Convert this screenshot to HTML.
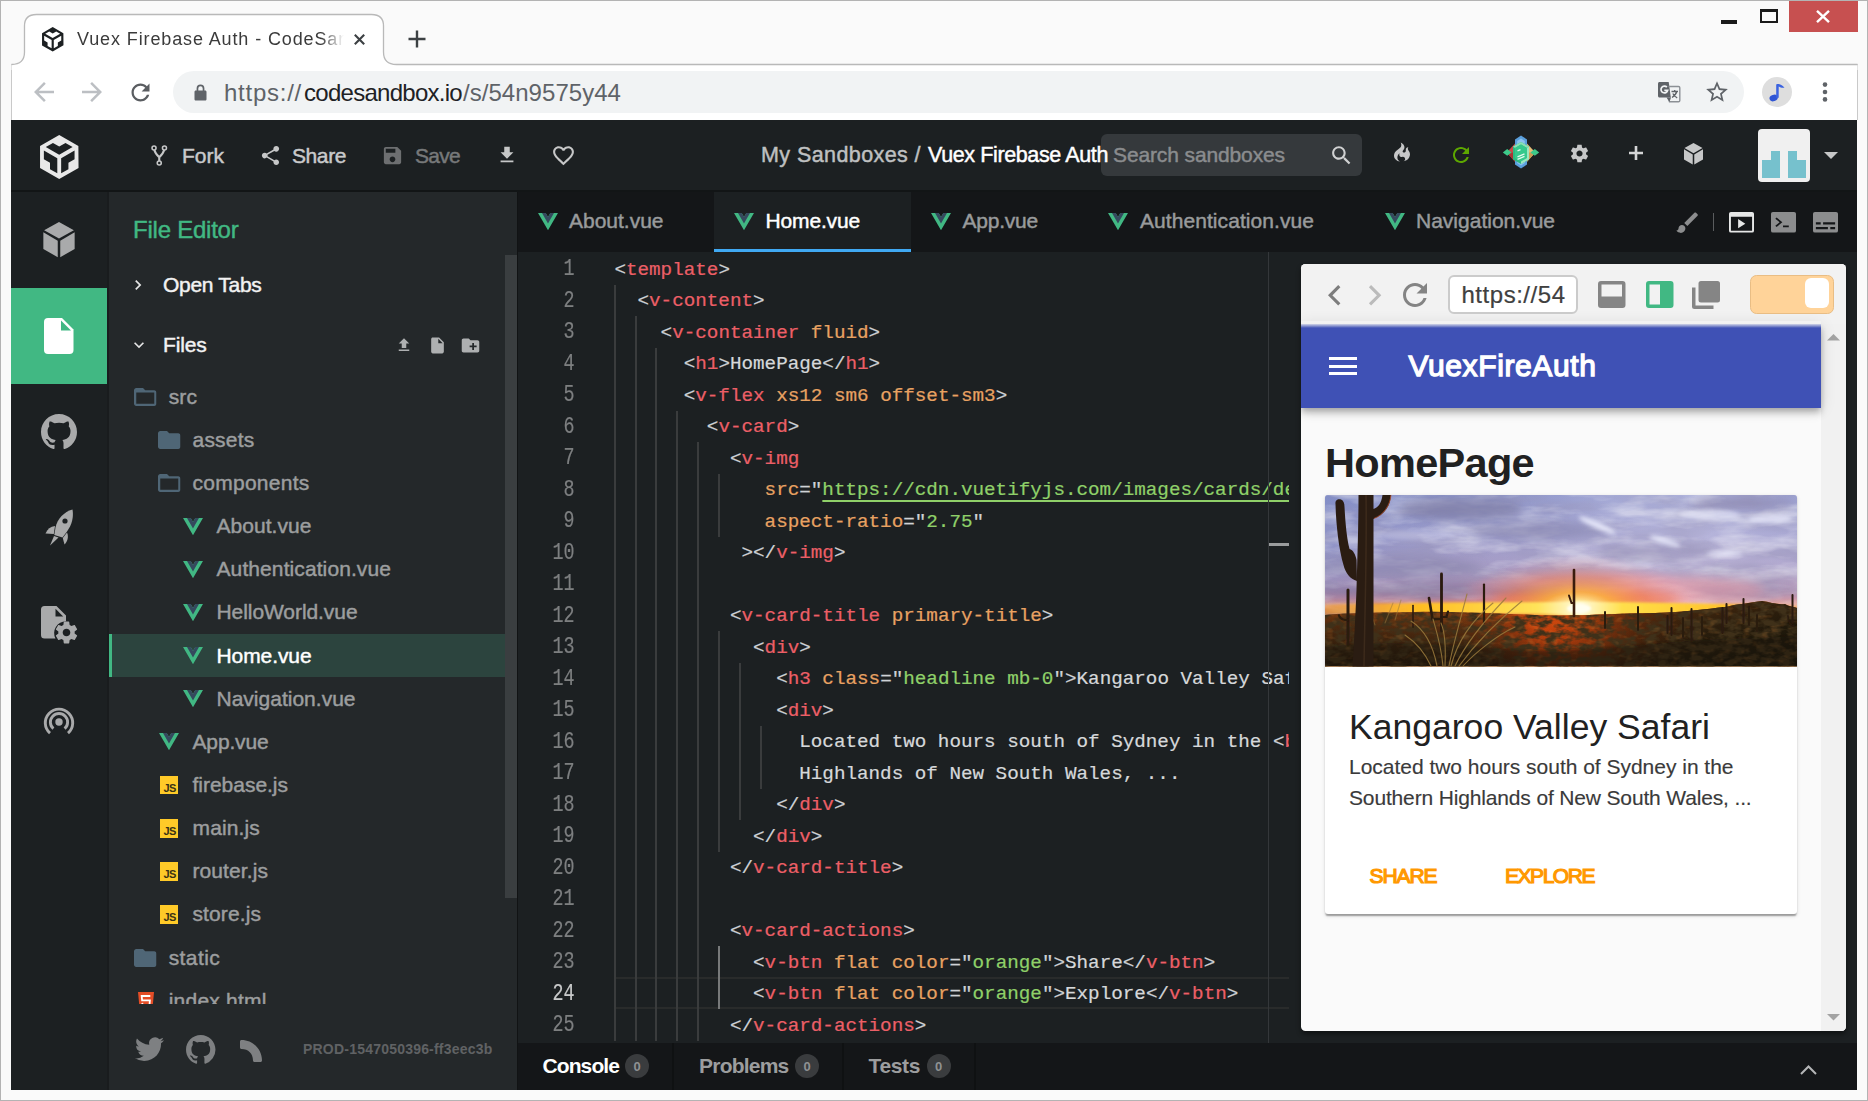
<!DOCTYPE html>
<html lang="en"><head><meta charset="utf-8"><title>Vuex Firebase Auth - CodeSandbox</title>
<style>
*{box-sizing:border-box;margin:0;padding:0}
html,body{width:1868px;height:1101px;overflow:hidden}
body{position:relative;background:#fafafa;font-family:"Liberation Sans",sans-serif;color:#222}
.a{position:absolute}
.x{position:absolute;white-space:nowrap;line-height:1;display:block}
svg{position:absolute;overflow:visible}
.b{font-weight:bold}
.w{-webkit-text-stroke:.45px currentColor}
.m{-webkit-text-stroke:.9px currentColor}
.mono{font-family:"Liberation Mono",monospace}
/* code colours */
.p{color:#cfd2d6}.tg{color:#ec5f67}.at{color:#e8a262}.st{color:#8fd069}.tx{color:#d6d8da}
.ln{-webkit-text-stroke:.3px currentColor;position:absolute;left:517px;width:57.5px;text-align:right;color:#7d7f80;font-family:"Liberation Mono",monospace;font-size:19.25px;line-height:1;white-space:nowrap}
.ln2{width:57.5px;text-align:right;font-family:"Liberation Mono",monospace;font-size:23px;transform:scaleX(.8);transform-origin:100% 50%;-webkit-text-stroke:.2px currentColor}
.cl{position:absolute;left:614.4px;-webkit-text-stroke:.22px currentColor;font-family:"Liberation Mono",monospace;font-size:19.25px;line-height:1;white-space:pre}
.g{position:absolute;width:2px;background:#353738}
.fn{color:#a9abac;font-size:21px}
</style></head>
<body>
<!-- ===== window frame ===== -->
<div class="a" style="left:0;top:0;width:1868px;height:1101px;border:1px solid #b3b3b3"></div>
<!-- toolbar white -->
<div class="a" style="left:11px;top:64px;width:1847px;height:56px;background:#fff;border-left:1px solid #c9c9c9;border-right:1px solid #c9c9c9"></div>
<!-- tab shape -->
<svg style="left:0;top:0" width="1868" height="70" viewBox="0 0 1868 70">
 <path d="M11.5 64.5 Q24.5 64.5 24.5 52 L24.5 26 Q24.5 14.5 36.5 14.5 L371.5 14.5 Q383.5 14.5 383.5 26 L383.5 52 Q383.5 64.5 396.5 64.5 L1857.5 64.5 L1857.5 70 L11.5 70 Z" fill="#fff"/>
 <path d="M11.5 64.5 Q24.5 64.5 24.5 52 L24.5 26 Q24.5 14.5 36.5 14.5 L371.5 14.5 Q383.5 14.5 383.5 26 L383.5 52 Q383.5 64.5 396.5 64.5 L1857.5 64.5" fill="none" stroke="#b9b9b9" stroke-width="1.3"/>
</svg>
<!-- ===== chrome tab strip ===== -->
<svg style="left:41.5px;top:27px" width="21.5" height="24.5" viewBox="2 0 21 24"><path fill="#1c2022" fill-rule="evenodd" d="M2 6l10.455-6L22.91 6 23 17.95 12.455 24 2 18V6zm2.088 2.481v4.757l3.345 1.86v3.516l3.972 2.296v-8.272L4.088 8.481zm16.739 0l-7.317 4.157v8.272l3.972-2.296V15.1l3.345-1.861V8.48zM5.134 6.601l7.303 4.144 7.32-4.18-3.871-2.197-3.41 1.945-3.43-1.968L5.133 6.6z"/></svg>
<span class="x" style="left:77.00px;top:30.00px;letter-spacing:0.879px;font-size:18px;color:#3b3b3b;-webkit-mask-image:linear-gradient(90deg,#000 0,#000 244px,transparent 267px);mask-image:linear-gradient(90deg,#000 0,#000 244px,transparent 267px)">Vuex Firebase Auth - CodeSand</span>
<svg style="left:354px;top:33.5px" width="11" height="11" viewBox="0 0 11 11"><path d="M0.8 0.8L10.2 10.2M10.2 0.8L0.8 10.2" stroke="#3c4043" stroke-width="2.1" fill="none"/></svg>
<svg style="left:407.5px;top:30px" width="18" height="18" viewBox="0 0 18 18"><path d="M9 0.5V17.5M0.5 9H17.5" stroke="#3c4043" stroke-width="2.4" fill="none"/></svg>
<!-- window controls -->
<div class="a" style="left:1721px;top:20px;width:16px;height:3.5px;background:#1a1a1a"></div>
<div class="a" style="left:1760px;top:9px;width:18px;height:14px;border:2.5px solid #1a1a1a;border-top-width:3px"></div>
<div class="a" style="left:1789px;top:1px;width:69px;height:31px;background:#c75050"></div>
<svg style="left:1816px;top:9.5px" width="14" height="13" viewBox="0 0 14 13"><path d="M1 0.8L13 12.2M13 0.8L1 12.2" stroke="#fff" stroke-width="2.4" fill="none"/></svg>
<!-- ===== chrome toolbar ===== -->
<svg style="left:29px;top:77px" width="30" height="30" viewBox="0 0 24 24"><path fill="#bcbfc3" d="M20 11H7.83l5.59-5.59L12 4l-8 8 8 8 1.41-1.41L7.83 13H20v-2z"/></svg>
<svg style="left:77px;top:77px" width="30" height="30" viewBox="0 0 24 24"><path fill="#bcbfc3" d="M12 4l-1.41 1.41L16.17 11H4v2h12.17l-5.58 5.59L12 20l8-8z"/></svg>
<svg style="left:126.5px;top:78.5px" width="27" height="27" viewBox="0 0 24 24"><path fill="#5a5d61" d="M17.65 6.35C16.2 4.9 14.21 4 12 4c-4.42 0-7.99 3.58-7.99 8s3.57 8 7.99 8c3.73 0 6.84-2.55 7.73-6h-2.08c-.82 2.33-3.04 4-5.65 4-3.31 0-6-2.69-6-6s2.69-6 6-6c1.66 0 3.14.69 4.22 1.78L13 11h7V4l-2.35 2.35z"/></svg>
<!-- omnibox -->
<div class="a" style="left:173px;top:71px;width:1571px;height:42px;border-radius:21px;background:#f1f3f4"></div>
<svg style="left:193.5px;top:84px" width="13" height="17" viewBox="0 0 13 17"><path fill="#5f6368" d="M2.6 6.6V4.4a3.9 3.9 0 0 1 7.8 0v2.2h.8c.7 0 1.3.6 1.3 1.3v7.3c0 .7-.6 1.3-1.3 1.3H1.8c-.7 0-1.3-.6-1.3-1.3V7.9c0-.7.6-1.3 1.3-1.3zm1.7 0h4.4V4.4a2.2 2.2 0 0 0-4.4 0z"/></svg>
<span class="x" style="left:224.00px;top:80.50px;letter-spacing:0.744px;font-size:24px;color:#5f6368">https://</span><span class="x" style="left:304.00px;top:80.50px;letter-spacing:-0.724px;font-size:24px;color:#202124">codesandbox.io</span><span class="x" style="left:463.00px;top:80.50px;letter-spacing:0.041px;font-size:24px;color:#5f6368">/s/54n9575y44</span>
<!-- translate icon -->
<svg style="left:1657px;top:80px" width="24" height="24" viewBox="0 0 24 24">
 <path fill="#5f6368" d="M2.5 2h9.2l2.1 15.5H2.5C1.7 17.500 1 16.800 1 16V3.500C1 2.700 1.700 2 2.500 2z"/>
 <path fill="none" stroke="#8c9095" stroke-width="1.4" d="M11.5 6.500H21.500c.8 0 1.300.6 1.300 1.300V20.500c0 .8-.6 1.300-1.300 1.300H12.500l-1.500-4"/>
 <path fill="#5f6368" d="M9.500 17.500l3 4.300 1.500-4.300z"/>
 <path fill="none" stroke="#f1f3f4" stroke-width="1.7" d="M9.900 7.200A3.400 3.400 0 1 0 10.700 10.400H7.300"/>
 <path fill="none" stroke="#5f6368" stroke-width="1.3" d="M14.500 11.500H21M17.700 10v1.500M19.700 11.500c-.6 2.500-2.400 4.600-4.700 6M15.800 13.500c.9 1.800 2.400 3.300 4.400 4.300"/>
</svg>
<svg style="left:1704px;top:78.500px" width="26" height="26" viewBox="0 0 24 24"><path fill="#5f6368" d="M22 9.240l-7.190-.62L12 2 9.190 8.630 2 9.240l5.460 4.730L5.820 21 12 17.270 18.180 21l-1.630-7.030L22 9.240zM12 15.400l-3.760 2.270 1-4.280-3.320-2.880 4.380-.38L12 6.100l1.710 4.040 4.380.38-3.320 2.880 1 4.280L12 15.400z"/></svg>
<!-- profile avatar -->
<div class="a" style="left:1762px;top:77px;width:30px;height:30px;border-radius:50%;background:#dedede"></div>
<svg style="left:1766px;top:81px" width="22" height="22" viewBox="0 0 22 22">
 <ellipse cx="7.600" cy="17" rx="4.200" ry="3.200" fill="#2f55d4" transform="rotate(-18 7.600 17)"/>
 <path d="M10.200 17V3.500c2.500-1.200 5.500.2 8.300 3.200-2.200.4-4-.1-5.800-1.300V16.800z" fill="#3b63e0"/>
</svg>
<svg style="left:1821px;top:80px" width="8" height="24" viewBox="0 0 8 24"><circle cx="4" cy="4.600" r="2.300" fill="#5f6368"/><circle cx="4" cy="12" r="2.300" fill="#5f6368"/><circle cx="4" cy="19.400" r="2.300" fill="#5f6368"/></svg>
<!-- ===== app container ===== -->
<div class="a" style="left:11px;top:120px;width:1846px;height:970px;background:#1c2022"></div>
<!-- header bottom border -->
<div class="a" style="left:11px;top:189.500px;width:1846px;height:2.500px;background:#121516"></div>
<!-- logo -->
<svg style="left:40px;top:134.500px" width="38.600" height="44" viewBox="2 0 21 24"><path fill="#e8e8e8" fill-rule="evenodd" d="M2 6l10.455-6L22.91 6 23 17.95 12.455 24 2 18V6zm2.088 2.481v4.757l3.345 1.860v3.516l3.972 2.296v-8.272L4.088 8.481zm16.739 0l-7.317 4.157v8.272l3.972-2.296V15.100l3.345-1.861V8.480zM5.134 6.601l7.303 4.144 7.320-4.180-3.871-2.197-3.410 1.945-3.430-1.968L5.133 6.600z"/></svg>
<!-- fork icon -->
<svg style="left:151px;top:145px" width="16.500" height="21" viewBox="0 0 18 23" fill="none" stroke="#c6c7c8" stroke-width="1.700">
 <circle cx="3.300" cy="3.300" r="2.200"/><circle cx="14.700" cy="3.300" r="2.200"/><circle cx="9" cy="19.700" r="2.200"/>
 <path d="M3.600 5.500C4.500 9 7 11.500 9 13.500V17.500M14.400 5.500C13.500 9 11 11.500 9 13.500" stroke-width="2.300"/>
</svg>
<span class="x w" style="left:182.00px;top:145.00px;font-size:21px;color:#c9cacb">Fork</span>
<svg style="left:258.500px;top:144px" width="23" height="23" viewBox="0 0 24 24"><path fill="#c6c7c8" d="M18 16.080c-.76 0-1.440.3-1.960.77L8.910 12.700c.05-.23.09-.46.09-.7s-.04-.47-.09-.7l7.050-4.110c.54.5 1.250.81 2.040.81 1.660 0 3-1.340 3-3s-1.340-3-3-3-3 1.340-3 3c0 .24.04.47.09.7L8.040 9.810C7.500 9.310 6.790 9 6 9c-1.660 0-3 1.340-3 3s1.340 3 3 3c.79 0 1.500-.31 2.040-.81l7.120 4.160c-.05.21-.08.43-.08.65 0 1.610 1.310 2.920 2.920 2.920 1.610 0 2.920-1.310 2.920-2.920s-1.310-2.920-2.920-2.920z"/></svg>
<span class="x w" style="left:292.00px;top:145.00px;letter-spacing:-0.409px;font-size:21px;color:#c9cacb">Share</span>
<svg style="left:381px;top:143.500px" width="23" height="23" viewBox="0 0 24 24"><path fill="#6d6f71" d="M17 3H5c-1.110 0-2 .9-2 2v14c0 1.100.89 2 2 2h14c1.100 0 2-.9 2-2V7l-4-4zm-5 16c-1.660 0-3-1.340-3-3s1.340-3 3-3 3 1.340 3 3-1.340 3-3 3zm3-10H5V5h10v4z"/></svg>
<span class="x w" style="left:415.00px;top:145.00px;letter-spacing:-0.719px;font-size:21px;color:#77797a">Save</span>
<svg style="left:495.500px;top:143.500px" width="22" height="22" viewBox="0 0 24 24"><path fill="#c6c7c8" d="M19 9h-4V3H9v6H5l7 7 7-7zM5 18v2h14v-2H5z"/></svg>
<svg style="left:550.500px;top:143px" width="25" height="25" viewBox="0 0 24 24"><path fill="#c6c7c8" d="M16.500 3c-1.740 0-3.410.81-4.500 2.090C10.910 3.810 9.240 3 7.500 3 4.420 3 2 5.420 2 8.500c0 3.780 3.400 6.860 8.550 11.540L12 21.350l1.450-1.320C18.600 15.360 22 12.280 22 8.500 22 5.420 19.580 3 16.500 3zm-4.400 15.550l-.1.100-.1-.1C7.140 14.240 4 11.390 4 8.500 4 6.500 5.500 5 7.500 5c1.540 0 3.040.99 3.570 2.360h1.870C13.460 5.990 14.960 5 16.500 5c2 0 3.500 1.500 3.500 3.500 0 2.890-3.140 5.740-7.900 10.050z"/></svg>
<!-- title -->
<!-- search -->
<div class="a" style="left:1101px;top:134px;width:261px;height:42px;border-radius:6px;background:#35393c"></div>
<span class="x w" style="left:1113.00px;top:144.00px;letter-spacing:-0.122px;font-size:21px;color:#8a8c8e">Search sandboxes</span>
<svg style="left:1329px;top:142.500px" width="25" height="25" viewBox="0 0 24 24"><path fill="#d0d1d2" d="M15.500 14h-.79l-.28-.27C15.410 12.590 16 11.110 16 9.500 16 5.910 13.090 3 9.500 3S3 5.910 3 9.500 5.910 16 9.500 16c1.610 0 3.090-.59 4.230-1.570l.27.28v.79l5 4.990L20.490 19l-4.990-5zm-6 0C7.010 14 5 11.990 5 9.500S7.010 5 9.500 5 14 7.010 14 9.500 11.990 14 9.500 14z"/></svg>
<span class="x w" style="left:761.00px;top:145.00px;letter-spacing:0.416px;font-size:21.500px;color:#bfc0c1">My Sandboxes /</span>
<span class="x w" style="left:928.00px;top:145.00px;letter-spacing:-0.381px;font-size:21.500px;color:#fff">Vuex Firebase Auth</span>
<!-- fire -->
<svg style="left:1394px;top:142.400px" width="16" height="20" viewBox="0 0 12 16" preserveAspectRatio="none"><path fill="#c6c7c8" d="M5.050.310c.81 2.170.41 3.380-.52 4.310C3.550 5.670 1.980 6.450.9 7.980c-1.450 2.050-1.700 6.530 3.530 7.700-2.200-1.160-2.670-4.520-.3-6.610-.61 2.030.53 3.330 1.940 2.860 1.390-.47 2.300.53 2.270 1.670-.02.780-.31 1.440-1.130 1.810 3.420-.59 4.780-3.420 4.780-5.560 0-2.840-2.530-3.220-1.250-5.610-1.520.13-2.030 1.130-1.890 2.750.09 1.080-1.020 1.800-1.860 1.330-.67-.41-.66-1.190-.06-1.780C8.180 5.310 8.680 2.450 5.050.320z"/></svg>
<!-- refresh green -->
<svg style="left:1449px;top:143.300px" width="24" height="24" viewBox="0 0 24 24"><path fill="#5da700" d="M17.650 6.350C16.200 4.900 14.210 4 12 4c-4.420 0-7.990 3.580-7.990 8s3.570 8 7.990 8c3.730 0 6.840-2.550 7.730-6h-2.080c-.82 2.330-3.040 4-5.650 4-3.310 0-6-2.690-6-6s2.690-6 6-6c1.660 0 3.140.69 4.220 1.780L13 11h7V4l-2.350 2.350z"/></svg>
<!-- colourful gem logo -->
<svg style="left:1502px;top:135px" width="38" height="34" viewBox="0 0 38 34">
 <path d="M19 .5L25 4.500V29.500L19 33.500 13 29.500V4.500z" fill="#5a9fdc"/><path d="M19 3.500L22.800 6V28L19 30.500 15.200 28V6z" fill="#8cc3ef"/>
 <path d="M4.700 17.600L13 8.500V26.800z" fill="#c84a4a"/><path d="M4.700 17.600H13V26.800z" fill="#a93636"/>
 <path d="M33.300 17.600L25 8.500V26.800z" fill="#e6bd78"/><path d="M33.300 17.600H25V26.800z" fill="#cc9c55"/>
 <path d="M.8 17.400L5.200 14 9.600 17.400 5.200 20.800z" fill="#3ec98a"/><path d="M28.400 17.400L32.800 14 37.200 17.400 32.800 20.800z" fill="#3ec98a"/>
 <path d="M19 6.900L27 11.500V24.500L19 29 11 24.500V11.500z" fill="#2cbb80"/><path d="M19 6.900L27 11.500 25 13 19 9.600 13 13 11 11.500z" fill="#8be0b4"/><path d="M13 13L19 9.600 25 13V23L19 26.500 13 23z" fill="#35c98c"/><path d="M25 13L27 11.500V24.500L19 29V26.500L25 23z" fill="#9be6c0"/>
 <path d="M15.500 15.800L18.500 14.600M15.500 21.800L22.500 18.800M15.500 24.400L22.500 21.400" stroke="#e4f9ee" stroke-width="1.300"/>
</svg>
<!-- gear -->
<svg style="left:1568.500px;top:142.500px" width="21" height="21" viewBox="0 0 24 24"><path fill="#c6c7c8" d="M19.430 12.980c.04-.32.07-.64.07-.98s-.03-.66-.07-.98l2.110-1.650c.19-.15.24-.42.12-.64l-2-3.460c-.12-.22-.39-.3-.61-.22l-2.490 1c-.52-.4-1.080-.73-1.690-.98l-.38-2.650C14.460 2.180 14.250 2 14 2h-4c-.25 0-.46.18-.49.42l-.38 2.650c-.61.25-1.170.59-1.690.98l-2.490-1c-.23-.09-.49 0-.61.220l-2 3.460c-.13.220-.07.49.12.640l2.110 1.650c-.04.320-.07.650-.07.980s.03.660.07.980l-2.110 1.650c-.19.150-.24.420-.12.640l2 3.460c.12.220.39.300.61.220l2.490-1c.52.400 1.080.73 1.690.98l.38 2.650c.03.240.24.420.49.420h4c.25 0 .46-.18.49-.42l.38-2.650c.61-.25 1.170-.59 1.690-.98l2.490 1c.23.09.49 0 .61-.22l2-3.460c.12-.22.07-.49-.12-.64l-2.110-1.650zM12 15.500c-1.930 0-3.500-1.570-3.500-3.500s1.570-3.500 3.500-3.500 3.500 1.570 3.500 3.500-1.570 3.500-3.500 3.500z"/></svg>
<!-- plus -->
<svg style="left:1629px;top:146px" width="14" height="14" viewBox="0 0 14 14"><path d="M7 0V14M0 7H14" stroke="#d4d5d6" stroke-width="2.600"/></svg>
<!-- cube -->
<svg style="left:1683.500px;top:142.500px" width="19" height="22" viewBox="0 0 20 23"><path fill="#c6c7c8" d="M10 0L19.500 5.200 10 10.600 0.500 5.200zM0 6.600L9.200 11.900V22.500L0 17.200zM20 6.600L10.800 11.900V22.500L20 17.200z"/></svg>
<!-- avatar -->
<div class="a" style="left:1758px;top:129px;width:52px;height:53px;border-radius:4px;background:#f0f0f0"></div>
<svg style="left:1758px;top:129px" width="52" height="53" viewBox="0 0 52 53"><path fill="#76c1cd" d="M4 31h9v-9h9v27H4zM30 22h9v9h9v18H30z"/></svg>
<svg style="left:1824px;top:151.500px" width="14" height="7" viewBox="0 0 14 7"><path fill="#c6c7c8" d="M0 0H14L7 7z"/></svg>
<!-- ===== nav sidebar + file panel ===== -->
<svg width="0" height="0" style="left:0;top:0"><defs>
 <symbol id="vue" viewBox="0 0 261.76 226.69"><path fill="#41b883" d="M161.096 0L130.872 52.35 100.648 0H0L130.872 226.688 261.744 0z"/><path fill="#35495e" d="M161.096 0L130.872 52.35 100.648 0H52.346L130.872 136.017 209.398 0z"/></symbol>
 <symbol id="fold" viewBox="2 4 20 16"><path fill="#4f6676" d="M10 4H4c-1.100 0-1.990.9-1.990 2L2 18c0 1.100.9 2 2 2h16c1.100 0 2-.9 2-2V8c0-1.100-.9-2-2-2h-8l-2-2z"/></symbol>
 <symbol id="fopen" viewBox="2 4 20 16"><path fill="#4f6676" d="M20 6h-8l-2-2H4c-1.100 0-1.990.9-1.990 2L2 18c0 1.100.9 2 2 2h16c1.100 0 2-.9 2-2V8c0-1.100-.9-2-2-2zm0 12H4V8h16v10z"/></symbol>
</defs></svg>
<div class="a" style="left:107px;top:192px;width:2px;height:898px;background:#191c1e"></div>
<div class="a" style="left:109px;top:192px;width:408px;height:898px;background:#24282a"></div>
<div class="a" style="left:517px;top:192px;width:1px;height:898px;background:#111314"></div>
<!-- file panel scrollbar thumb -->
<div class="a" style="left:505px;top:255px;width:12px;height:643px;background:#3a3e40"></div>
<!-- nav: active item -->
<div class="a" style="left:11px;top:288px;width:96px;height:96px;background:#41b883"></div>
<svg style="left:133.7px;top:387.7px" width="22.5" height="18"><use href="#fopen"/></svg>
<span class="x w" style="left:168.70px;top:385.60px;letter-spacing:0.167px;font-size:21px;color:#9c9e9f">src</span>
<svg style="left:157.7px;top:430.8px" width="22.5" height="18"><use href="#fold"/></svg>
<span class="x w" style="left:192.50px;top:428.70px;letter-spacing:0.216px;font-size:21px;color:#9c9e9f">assets</span>
<svg style="left:157.7px;top:474.0px" width="22.5" height="18"><use href="#fopen"/></svg>
<span class="x w" style="left:192.50px;top:471.90px;letter-spacing:0.259px;font-size:21px;color:#9c9e9f">components</span>
<svg style="left:182.5px;top:517.5px" width="20" height="17.3"><use href="#vue"/></svg>
<span class="x w" style="left:216.50px;top:515.00px;letter-spacing:0.047px;font-size:21px;color:#9c9e9f">About.vue</span>
<svg style="left:182.5px;top:560.7px" width="20" height="17.3"><use href="#vue"/></svg>
<span class="x w" style="left:216.50px;top:558.20px;letter-spacing:0.095px;font-size:21px;color:#9c9e9f">Authentication.vue</span>
<svg style="left:182.5px;top:603.9px" width="20" height="17.3"><use href="#vue"/></svg>
<span class="x w" style="left:216.50px;top:601.40px;letter-spacing:-0.073px;font-size:21px;color:#9c9e9f">HelloWorld.vue</span>
<div class="a" style="left:109px;top:634.0px;width:396px;height:43.2px;background:#2c443e;border-left:3px solid #41b883"></div>
<svg style="left:182.5px;top:647.0px" width="20" height="17.3"><use href="#vue"/></svg>
<span class="x w" style="left:216.50px;top:644.50px;letter-spacing:-0.090px;font-size:21px;color:#fff">Home.vue</span>
<svg style="left:182.5px;top:690.1px" width="20" height="17.3"><use href="#vue"/></svg>
<span class="x w" style="left:216.50px;top:687.60px;letter-spacing:0.006px;font-size:21px;color:#9c9e9f">Navigation.vue</span>
<svg style="left:158.5px;top:733.3px" width="20" height="17.3"><use href="#vue"/></svg>
<span class="x w" style="left:192.50px;top:730.80px;letter-spacing:-0.152px;font-size:21px;color:#9c9e9f">App.vue</span>
<div class="a" style="left:159.8px;top:775.8px;width:18.5px;height:18.5px;background:#ffca28"></div><span class="x b" style="left:163.4px;top:782.8px;font-size:11px;color:#3a3214;letter-spacing:-.6px">JS</span>
<span class="x w" style="left:192.50px;top:773.90px;letter-spacing:-0.020px;font-size:21px;color:#9c9e9f">firebase.js</span>
<div class="a" style="left:159.8px;top:819.0px;width:18.5px;height:18.5px;background:#ffca28"></div><span class="x b" style="left:163.4px;top:826.0px;font-size:11px;color:#3a3214;letter-spacing:-.6px">JS</span>
<span class="x w" style="left:192.50px;top:817.10px;letter-spacing:0.138px;font-size:21px;color:#9c9e9f">main.js</span>
<div class="a" style="left:159.8px;top:862.1px;width:18.5px;height:18.5px;background:#ffca28"></div><span class="x b" style="left:163.4px;top:869.1px;font-size:11px;color:#3a3214;letter-spacing:-.6px">JS</span>
<span class="x w" style="left:192.50px;top:860.20px;letter-spacing:0.089px;font-size:21px;color:#9c9e9f">router.js</span>
<div class="a" style="left:159.8px;top:905.3px;width:18.5px;height:18.5px;background:#ffca28"></div><span class="x b" style="left:163.4px;top:912.3px;font-size:11px;color:#3a3214;letter-spacing:-.6px">JS</span>
<span class="x w" style="left:192.50px;top:903.40px;letter-spacing:0.102px;font-size:21px;color:#9c9e9f">store.js</span>
<svg style="left:133.7px;top:948.6px" width="22.5" height="18"><use href="#fold"/></svg>
<span class="x w" style="left:168.70px;top:946.50px;letter-spacing:0.414px;font-size:21px;color:#9c9e9f">static</span>
<svg style="left:137.8px;top:991.6px" width="16" height="18" viewBox="0 0 16 18"><path fill="#e44d26" d="M0 0H16L14.500 16 8 18 1.500 16z"/><path fill="none" stroke="#fff" stroke-width="1.800" d="M12.300 4H3.700L4.100 8.300H11.900L11.500 12.800 8 13.900 4.500 12.800 4.300 10.800"/></svg>
<span class="x w" style="left:168.70px;top:989.70px;letter-spacing:0.228px;font-size:21px;color:#9c9e9f">index.html</span>
<div class="a" style="left:109px;top:1004px;width:396px;height:86px;background:#24282a"></div>
<!-- panel titles -->
<span class="x w" style="left:133.00px;top:218.00px;letter-spacing:-0.232px;font-size:24px;color:#41b883">File Editor</span>
<svg style="left:128px;top:275px" width="20" height="20" viewBox="0 0 24 24"><path fill="#e4e5e5" d="M10 6L8.590 7.410 13.170 12l-4.580 4.590L10 18l6-6z"/></svg>
<span class="x w" style="left:163.00px;top:274.00px;letter-spacing:-0.299px;font-size:21px;color:#f2f2f2">Open Tabs</span>
<svg style="left:129px;top:335px" width="20" height="20" viewBox="0 0 24 24"><path fill="#e4e5e5" d="M7.410 8.590L12 13.170l4.590-4.580L18 10l-6 6-6-6 1.410-1.410z"/></svg>
<span class="x w" style="left:163.00px;top:334.00px;letter-spacing:-0.169px;font-size:21px;color:#f2f2f2">Files</span>
<svg style="left:395px;top:336px" width="18" height="18" viewBox="0 0 24 24"><path fill="#aeb0b1" d="M9 16h6v-6h4l-7-7-7 7h4zm-4 2h14v2H5z"/></svg>
<svg style="left:428px;top:335.500px" width="19" height="19" viewBox="0 0 24 24"><path fill="#aeb0b1" d="M6 2c-1.100 0-1.990.9-1.990 2L4 20c0 1.100.89 2 1.990 2H18c1.100 0 2-.9 2-2V8l-6-6H6zm7 7V3.500L18.500 9H13z"/></svg>
<svg style="left:460px;top:335px" width="21" height="21" viewBox="0 0 24 24"><path fill="#aeb0b1" d="M20 6h-8l-2-2H4c-1.110 0-1.990.89-1.990 2L2 18c0 1.110.89 2 2 2h16c1.110 0 2-.89 2-2V8c0-1.110-.89-2-2-2zm-1 8h-3v3h-2v-3h-3v-2h3V9h2v3h3v2z"/></svg>
<!-- nav icons -->
<svg style="left:43px;top:222px" width="32" height="36" viewBox="0 0 20 23"><path fill="#a9aaab" d="M10 0L19.500 5.200 10 10.600 0.500 5.200zM0 6.600L9.200 11.900V22.500L0 17.200zM20 6.600L10.800 11.900V22.500L20 17.200z"/></svg>
<svg style="left:44px;top:318px" width="29.500" height="36" viewBox="0 0 29.500 36"><path fill="#fff" d="M4 0H18L29.500 11.500V32a4 4 0 0 1-4 4H4a4 4 0 0 1-4-4V4A4 4 0 0 1 4 0z"/><path fill="#41b883" d="M17 2.500V12.500H27z"/></svg>
<svg style="left:40.500px;top:414px" width="36" height="35.200" viewBox="0 0 16 15.640"><path fill="#a9aaab" d="M8 0C3.580 0 0 3.580 0 8c0 3.540 2.290 6.530 5.470 7.590.4.070.55-.17.55-.38 0-.19-.01-.82-.01-1.490-2.010.37-2.530-.49-2.690-.94-.09-.23-.48-.94-.82-1.130-.28-.15-.68-.52-.01-.53.63-.01 1.080.58 1.230.82.720 1.210 1.870.87 2.330.66.070-.52.280-.87.510-1.070-1.780-.2-3.640-.89-3.640-3.950 0-.87.310-1.590.82-2.150-.08-.2-.36-1.020.08-2.120 0 0 .67-.21 2.200.82.640-.18 1.320-.27 2-.27.680 0 1.360.09 2 .27 1.530-1.040 2.200-.82 2.200-.82.440 1.100.16 1.920.08 2.120.51.560.82 1.270.82 2.150 0 3.070-1.870 3.750-3.650 3.950.29.250.54.730.54 1.480 0 1.070-.01 1.930-.01 2.200 0 .21.150.46.550.38A8.013 8.013 0 0 0 16 8c0-4.420-3.580-8-8-8z"/></svg>
<!-- rocket -->
<svg style="left:45px;top:509px" width="29" height="37" viewBox="0 0 29 37"><g fill="#a9aaab"><path d="M27.500 0.500C19 3 12.500 9.500 10.500 18.500L9.300 26 17.500 28.500 22 22.500C27 15.500 28.800 8 27.500 0.500z"/><path d="M10 17C5.500 17.500 2.500 20 0.500 24.500L8.800 25z"/><path d="M22 23.500C23.800 27.500 22.800 32 19.500 35.500L17.800 29z"/><path d="M9 27L13.500 28.500 5 36.500z"/></g><circle cx="20" cy="12" r="2.600" fill="#1c2022"/></svg>
<!-- file + gear -->
<svg style="left:41px;top:605.500px" width="36" height="37" viewBox="0 0 36 37"><path fill="#a9aaab" d="M3.500 0H15.500L25 9.500V15.200A11.800 11.800 0 0 0 14.500 32.500H3.500A3.500 3.500 0 0 1 0 29V3.500A3.500 3.500 0 0 1 3.500 0z"/><path fill="#1c2022" d="M14.500 2.800V10.500H22.200z"/><svg x="12.400" y="13.400" width="26.200" height="26.200" viewBox="0 0 24 24"><path fill="#a9aaab" d="M19.430 12.980c.04-.32.07-.64.07-.98s-.03-.66-.07-.98l2.110-1.650c.19-.15.240-.42.120-.64l-2-3.460c-.12-.22-.39-.3-.61-.22l-2.490 1c-.52-.4-1.080-.73-1.690-.98l-.38-2.650C14.460 2.180 14.250 2 14 2h-4c-.25 0-.46.180-.49.420l-.38 2.650c-.61.250-1.170.590-1.690.980l-2.490-1c-.23-.09-.49 0-.61.220l-2 3.460c-.13.220-.07.490.12.640l2.110 1.650c-.04.320-.07.650-.07.980s.03.660.07.980l-2.110 1.650c-.19.150-.24.420-.12.640l2 3.460c.12.220.39.300.61.220l2.490-1c.52.400 1.080.730 1.690.980l.38 2.650c.03.240.24.420.49.420h4c.25 0 .46-.18.490-.42l.38-2.650c.61-.25 1.170-.59 1.690-.98l2.490 1c.23.090.49 0 .61-.22l2-3.460c.12-.22.070-.49-.12-.64l-2.110-1.650zM12 15.500c-1.930 0-3.500-1.570-3.500-3.500s1.570-3.500 3.500-3.500 3.500 1.570 3.500 3.500-1.570 3.500-3.500 3.500z"/></svg></svg>
<!-- broadcast -->
<svg style="left:43px;top:705.500px" width="32" height="30" viewBox="0 0 32 30" fill="none" stroke="#a9aaab" stroke-linecap="butt"><circle cx="16" cy="16" r="3.700" fill="#a9aaab" stroke="none"/><path d="M10.400 22.700A8.600 8.600 0 1 1 21.600 22.700" stroke-width="2.900"/><path d="M7 27.200A13.700 13.700 0 1 1 25 27.200" stroke-width="2.900"/></svg>
<!-- footer social icons -->
<svg style="left:135px;top:1037px" width="29" height="25" viewBox="0 2 24 20.500"><path fill="#7e8082" d="M23.953 4.570a10 10 0 0 1-2.825.775 4.958 4.958 0 0 0 2.163-2.723c-.951.555-2.005.959-3.127 1.184a4.920 4.920 0 0 0-8.384 4.482C7.690 8.095 4.067 6.130 1.640 3.162a4.822 4.822 0 0 0-.666 2.475c0 1.710.870 3.213 2.188 4.096a4.904 4.904 0 0 1-2.228-.616v.06a4.923 4.923 0 0 0 3.946 4.827 4.996 4.996 0 0 1-2.212.085 4.936 4.936 0 0 0 4.604 3.417 9.867 9.867 0 0 1-6.102 2.105c-.39 0-.779-.023-1.170-.067a13.995 13.995 0 0 0 7.557 2.209c9.053 0 13.998-7.496 13.998-13.985 0-.21 0-.42-.015-.63A9.935 9.935 0 0 0 24 4.590z"/></svg>
<svg style="left:185.500px;top:1035px" width="29.500" height="28.800" viewBox="0 0 16 15.640"><path fill="#7e8082" d="M8 0C3.580 0 0 3.580 0 8c0 3.540 2.290 6.530 5.470 7.590.4.070.55-.17.55-.38 0-.19-.01-.82-.01-1.490-2.010.37-2.530-.49-2.690-.94-.09-.23-.48-.94-.82-1.130-.28-.15-.68-.52-.01-.53.63-.01 1.080.58 1.230.82.720 1.210 1.870.87 2.330.66.070-.52.280-.87.510-1.070-1.780-.2-3.640-.89-3.640-3.950 0-.87.310-1.590.82-2.150-.08-.2-.36-1.020.08-2.120 0 0 .67-.21 2.200.82.640-.18 1.320-.27 2-.27.680 0 1.360.09 2 .27 1.530-1.040 2.200-.82 2.200-.82.440 1.100.16 1.920.08 2.120.51.560.82 1.270.82 2.150 0 3.070-1.870 3.750-3.650 3.950.29.250.54.730.54 1.480 0 1.070-.01 1.930-.01 2.200 0 .21.150.46.550.38A8.013 8.013 0 0 0 16 8c0-4.420-3.580-8-8-8z"/></svg>
<svg style="left:240px;top:1039.500px" width="22" height="22" viewBox="0 0 22 22"><path fill="#7e8082" d="M0 1.500C0 .7.700 0 1.500 0 12.800 0 22 9.200 22 20.500c0 .8-.7 1.500-1.500 1.500h-6c-.8 0-1.500-.7-1.500-1.500C13 13.600 8.400 9 1.500 9 .7 9 0 8.300 0 7.500z"/></svg>
<span class="x b" style="left:303.00px;top:1042.00px;letter-spacing:0.210px;font-size:14px;color:#606264">PROD-1547050396-ff3eec3b</span>
<!-- ===== editor tabs ===== -->
<div class="a" style="left:518px;top:192px;width:1339px;height:60px;background:#141618"></div>
<div class="a" style="left:714px;top:192px;width:197px;height:60px;background:#1c2022;border-bottom:3.5px solid #40a9f3"></div>
<svg style="left:538.0px;top:212.5px" width="20" height="17.3"><use href="#vue"/></svg><span class="x w" style="left:569.00px;top:210.00px;letter-spacing:-0.009px;font-size:21px;color:#999b9c">About.vue</span>
<svg style="left:734.0px;top:212.5px" width="20" height="17.3"><use href="#vue"/></svg><span class="x w" style="left:765.50px;top:210.00px;letter-spacing:-0.152px;font-size:21px;color:#fff">Home.vue</span>
<svg style="left:931.0px;top:212.5px" width="20" height="17.3"><use href="#vue"/></svg><span class="x w" style="left:962.50px;top:210.00px;letter-spacing:-0.223px;font-size:21px;color:#999b9c">App.vue</span>
<svg style="left:1108.0px;top:212.5px" width="20" height="17.3"><use href="#vue"/></svg><span class="x w" style="left:1140.00px;top:210.00px;letter-spacing:0.067px;font-size:21px;color:#999b9c">Authentication.vue</span>
<svg style="left:1385.0px;top:212.5px" width="20" height="17.3"><use href="#vue"/></svg><span class="x w" style="left:1416.00px;top:210.00px;letter-spacing:0.006px;font-size:21px;color:#999b9c">Navigation.vue</span>
<!-- tab bar right icons -->
<svg style="left:1673.700px;top:208.600px" width="27.300" height="27.300" viewBox="0 0 24 24"><path fill="#8c8d8e" d="M7 14c-1.660 0-3 1.340-3 3 0 1.310-1.160 2-2 2 .92 1.220 2.490 2 4 2 2.210 0 4-1.790 4-4 0-1.660-1.340-3-3-3zm13.710-9.370l-1.340-1.340c-.39-.39-1.020-.39-1.410 0L9 12.250 11.750 15l8.960-8.960c.39-.39.39-1.020 0-1.410z"/></svg>
<div class="a" style="left:1713px;top:213px;width:1px;height:18px;background:#5a5c5e"></div>
<svg style="left:1728.500px;top:212px" width="25" height="20.500" viewBox="0 0 26 22" preserveAspectRatio="none"><path fill="#e6e7e7" fill-rule="evenodd" d="M2 0H24a2 2 0 0 1 2 2V20a2 2 0 0 1-2 2H2a2 2 0 0 1-2-2V2A2 2 0 0 1 2 0zM2 5V20H24V5zM9.500 7.500L17 12.500 9.500 17.500z"/></svg>
<svg style="left:1770.500px;top:212px" width="25" height="20.500" viewBox="0 0 26 22" preserveAspectRatio="none"><path fill="#8c8d8e" fill-rule="evenodd" d="M2 0H24a2 2 0 0 1 2 2V20a2 2 0 0 1-2 2H2a2 2 0 0 1-2-2V2A2 2 0 0 1 2 0zM5.800 6L4.500 7.300 9 11 4.500 14.700 5.800 16 11.800 11zM12.500 14.500H18.500V16.300H12.500z"/></svg>
<svg style="left:1812.500px;top:212px" width="25" height="20.500" viewBox="0 0 26 22" preserveAspectRatio="none"><path fill="#8c8d8e" fill-rule="evenodd" d="M2 0H24a2 2 0 0 1 2 2V20a2 2 0 0 1-2 2H2a2 2 0 0 1-2-2V2A2 2 0 0 1 2 0zM3 11V13.500H8V11zM10.500 11V13.500H23V11zM3 16V18.500H15.500V16zM18 16V18.500H23V16z"/></svg>
<!-- ===== code editor ===== -->
<div class="a" style="left:518px;top:252px;width:771px;height:791px;overflow:hidden">
<div class="a" style="left:-518px;top:-252px;width:1868px;height:1101px">
<div class="a" style="left:614px;top:977px;width:676px;height:32px;border-top:2.5px solid #292b2b;border-bottom:2.5px solid #292b2b"></div>
<div class="g" style="left:613.6px;top:284.5px;height:756.0px;background:#3a3c3d"></div>
<div class="g" style="left:634.5px;top:316.0px;height:724.5px;background:#3a3c3d"></div>
<div class="g" style="left:655.4px;top:347.5px;height:693.0px;background:#3a3c3d"></div>
<div class="g" style="left:676.3px;top:410.5px;height:630.0px;background:#3a3c3d"></div>
<div class="g" style="left:697.2px;top:442.0px;height:598.5px;background:#3a3c3d"></div>
<div class="g" style="left:718.1px;top:473.5px;height:63.0px;background:#3a3c3d"></div>
<div class="g" style="left:718.1px;top:631.0px;height:220.5px;background:#3a3c3d"></div>
<div class="g" style="left:739.0px;top:662.5px;height:157.5px;background:#3a3c3d"></div>
<div class="g" style="left:759.9px;top:725.5px;height:63.0px;background:#3a3c3d"></div>
<div class="g" style="left:718.1px;top:946.0px;height:63.0px;background:#77797a"></div>
<span class="x ln2" style="left:517.00px;top:258.10px;color:#7d7f80">1</span><div class="cl" style="top:260.59px"><span class="p">&lt;</span><span class="tg">template</span><span class="p">&gt;</span></div>
<span class="x ln2" style="left:517.00px;top:289.60px;color:#7d7f80">2</span><div class="cl" style="top:292.09px">  <span class="p">&lt;</span><span class="tg">v-content</span><span class="p">&gt;</span></div>
<span class="x ln2" style="left:517.00px;top:321.10px;color:#7d7f80">3</span><div class="cl" style="top:323.59px">    <span class="p">&lt;</span><span class="tg">v-container</span> <span class="at">fluid</span><span class="p">&gt;</span></div>
<span class="x ln2" style="left:517.00px;top:352.60px;color:#7d7f80">4</span><div class="cl" style="top:355.09px">      <span class="p">&lt;</span><span class="tg">h1</span><span class="p">&gt;</span><span class="tx">HomePage</span><span class="p">&lt;/</span><span class="tg">h1</span><span class="p">&gt;</span></div>
<span class="x ln2" style="left:517.00px;top:384.10px;color:#7d7f80">5</span><div class="cl" style="top:386.59px">      <span class="p">&lt;</span><span class="tg">v-flex</span> <span class="at">xs12</span> <span class="at">sm6</span> <span class="at">offset-sm3</span><span class="p">&gt;</span></div>
<span class="x ln2" style="left:517.00px;top:415.60px;color:#7d7f80">6</span><div class="cl" style="top:418.09px">        <span class="p">&lt;</span><span class="tg">v-card</span><span class="p">&gt;</span></div>
<span class="x ln2" style="left:517.00px;top:447.10px;color:#7d7f80">7</span><div class="cl" style="top:449.59px">          <span class="p">&lt;</span><span class="tg">v-img</span></div>
<span class="x ln2" style="left:517.00px;top:478.60px;color:#7d7f80">8</span><div class="cl" style="top:481.09px">             <span class="at">src</span><span class="p">="</span><span class="st" style="text-decoration:underline;text-underline-offset:5px;text-decoration-thickness:2px">https://cdn.vuetifyjs.com/images/cards/desert.jpg</span><span class="p">"</span></div>
<span class="x ln2" style="left:517.00px;top:510.10px;color:#7d7f80">9</span><div class="cl" style="top:512.59px">             <span class="at">aspect-ratio</span><span class="p">="</span><span class="st">2.75</span><span class="p">"</span></div>
<span class="x ln2" style="left:517.00px;top:541.60px;color:#7d7f80">10</span><div class="cl" style="top:544.09px">           <span class="p">&gt;&lt;/</span><span class="tg">v-img</span><span class="p">&gt;</span></div>
<span class="x ln2" style="left:517.00px;top:573.10px;color:#7d7f80">11</span>
<span class="x ln2" style="left:517.00px;top:604.60px;color:#7d7f80">12</span><div class="cl" style="top:607.09px">          <span class="p">&lt;</span><span class="tg">v-card-title</span> <span class="at">primary-title</span><span class="p">&gt;</span></div>
<span class="x ln2" style="left:517.00px;top:636.10px;color:#7d7f80">13</span><div class="cl" style="top:638.59px">            <span class="p">&lt;</span><span class="tg">div</span><span class="p">&gt;</span></div>
<span class="x ln2" style="left:517.00px;top:667.60px;color:#7d7f80">14</span><div class="cl" style="top:670.09px">              <span class="p">&lt;</span><span class="tg">h3</span> <span class="at">class</span><span class="p">="</span><span class="st">headline mb-0</span><span class="p">"</span><span class="p">&gt;</span><span class="tx">Kangaroo Valley Safari</span><span class="p">&lt;/</span><span class="tg">h3</span><span class="p">&gt;</span></div>
<span class="x ln2" style="left:517.00px;top:699.10px;color:#7d7f80">15</span><div class="cl" style="top:701.59px">              <span class="p">&lt;</span><span class="tg">div</span><span class="p">&gt;</span></div>
<span class="x ln2" style="left:517.00px;top:730.60px;color:#7d7f80">16</span><div class="cl" style="top:733.09px">                <span class="tx">Located two hours south of Sydney in the </span><span class="p">&lt;</span><span class="tg">br</span><span class="p">&gt;</span><span class="tx">Southern</span></div>
<span class="x ln2" style="left:517.00px;top:762.10px;color:#7d7f80">17</span><div class="cl" style="top:764.59px">                <span class="tx">Highlands of New South Wales, ...</span></div>
<span class="x ln2" style="left:517.00px;top:793.60px;color:#7d7f80">18</span><div class="cl" style="top:796.09px">              <span class="p">&lt;/</span><span class="tg">div</span><span class="p">&gt;</span></div>
<span class="x ln2" style="left:517.00px;top:825.10px;color:#7d7f80">19</span><div class="cl" style="top:827.59px">            <span class="p">&lt;/</span><span class="tg">div</span><span class="p">&gt;</span></div>
<span class="x ln2" style="left:517.00px;top:856.60px;color:#7d7f80">20</span><div class="cl" style="top:859.09px">          <span class="p">&lt;/</span><span class="tg">v-card-title</span><span class="p">&gt;</span></div>
<span class="x ln2" style="left:517.00px;top:888.10px;color:#7d7f80">21</span>
<span class="x ln2" style="left:517.00px;top:919.60px;color:#7d7f80">22</span><div class="cl" style="top:922.09px">          <span class="p">&lt;</span><span class="tg">v-card-actions</span><span class="p">&gt;</span></div>
<span class="x ln2" style="left:517.00px;top:951.10px;color:#7d7f80">23</span><div class="cl" style="top:953.59px">            <span class="p">&lt;</span><span class="tg">v-btn</span> <span class="at">flat</span> <span class="at">color</span><span class="p">="</span><span class="st">orange</span><span class="p">"</span><span class="p">&gt;</span><span class="tx">Share</span><span class="p">&lt;/</span><span class="tg">v-btn</span><span class="p">&gt;</span></div>
<span class="x ln2" style="left:517.00px;top:982.60px;color:#c8c9ca">24</span><div class="cl" style="top:985.09px">            <span class="p">&lt;</span><span class="tg">v-btn</span> <span class="at">flat</span> <span class="at">color</span><span class="p">="</span><span class="st">orange</span><span class="p">"</span><span class="p">&gt;</span><span class="tx">Explore</span><span class="p">&lt;/</span><span class="tg">v-btn</span><span class="p">&gt;</span></div>
<span class="x ln2" style="left:517.00px;top:1014.10px;color:#7d7f80">25</span><div class="cl" style="top:1016.59px">          <span class="p">&lt;/</span><span class="tg">v-card-actions</span><span class="p">&gt;</span></div>
</div></div>
<div class="a" style="left:1268px;top:252px;width:1px;height:791px;background:#34373a"></div>
<div class="a" style="left:1269px;top:543.3px;width:20px;height:3px;background:#9a9c9d"></div>
<!-- ===== bottom console bar ===== -->
<div class="a" style="left:518px;top:1043px;width:1339px;height:47px;background:#141618"></div>
<span class="x b" style="left:542.50px;top:1055.00px;letter-spacing:-0.906px;font-size:21px;color:#fff">Console</span>
<div class="a" style="left:625px;top:1054px;width:24px;height:24px;border-radius:50%;background:#3a3c3e"></div><span class="x b" style="left:633.500px;top:1060px;font-size:13px;color:#8f9192">0</span>
<div class="a" style="left:672px;top:1043px;width:2px;height:47px;background:#0f1112"></div>
<span class="x b" style="left:699.00px;top:1055.00px;letter-spacing:-0.775px;font-size:21px;color:#9c9d9e">Problems</span>
<div class="a" style="left:795px;top:1054px;width:24px;height:24px;border-radius:50%;background:#3a3c3e"></div><span class="x b" style="left:803.500px;top:1060px;font-size:13px;color:#8f9192">0</span>
<div class="a" style="left:842px;top:1043px;width:2px;height:47px;background:#0f1112"></div>
<span class="x b" style="left:868.50px;top:1055.00px;letter-spacing:-0.362px;font-size:21px;color:#9c9d9e">Tests</span>
<div class="a" style="left:926.500px;top:1054px;width:24px;height:24px;border-radius:50%;background:#3a3c3e"></div><span class="x b" style="left:935px;top:1060px;font-size:13px;color:#8f9192">0</span>
<div class="a" style="left:974px;top:1043px;width:2px;height:47px;background:#0f1112"></div>
<svg style="left:1799.500px;top:1065px" width="17" height="10" viewBox="0 0 17 10"><path d="M1 9L8.500 1.500 16 9" fill="none" stroke="#b5b6b7" stroke-width="2"/></svg>
<!-- ===== preview window ===== -->
<div class="a" style="left:1301px;top:264px;width:545px;height:767px;border-radius:4.500px;background:#fafafa;box-shadow:0 3px 5px rgba(0,0,0,.45);overflow:hidden">
 <div class="a" style="left:0;top:0;width:545px;height:60px;background:#f2f2f2"></div>
 <!-- scrollbar track -->
 <div class="a" style="left:520px;top:60px;width:25px;height:707px;background:#f1f1f1"></div>
 <svg style="left:526px;top:69.500px" width="13" height="6.500" viewBox="0 0 13 6.500"><path fill="#a3a3a3" d="M0 6.500H13L6.500 0z"/></svg>
 <svg style="left:526px;top:749.500px" width="13" height="6.500" viewBox="0 0 13 6.500"><path fill="#a3a3a3" d="M0 0H13L6.500 6.500z"/></svg>
 <!-- app bar -->
 <div class="a" style="left:0;top:60px;width:520px;height:84px;background:#3f51b5;box-shadow:0 3px 6px -1px rgba(0,0,0,.2),0 6px 7px 0 rgba(0,0,0,.14),0 1px 15px 0 rgba(0,0,0,.12)"></div>
 <div class="a" style="left:0;top:57px;width:520px;height:7px;background:linear-gradient(180deg,rgba(242,242,242,1) 30%,rgba(242,242,242,0))"></div>
 <!-- card -->
 <div class="a" style="left:24px;top:231px;width:472px;height:419px;border-radius:3px;background:#fff;box-shadow:0 3px 1.500px -1.500px rgba(0,0,0,.2),0 1.500px 1.500px 0 rgba(0,0,0,.14),0 1.500px 4.500px 0 rgba(0,0,0,.12)"></div>
</div>
<!-- preview nav icons -->
<svg style="left:0;top:0" width="1868" height="400" viewBox="0 0 1868 400" fill="none" stroke-width="3.100"><path d="M1339.300 286.200L1330.200 295.300 1339.300 304.400" stroke="#7d7d7d"/><path d="M1370 286.200L1379.100 295.300 1370 304.400" stroke="#bbb"/></svg>
<svg style="left:1397px;top:276.500px" width="36" height="36" viewBox="0 0 24 24"><path fill="#848484" d="M17.650 6.350C16.200 4.900 14.210 4 12 4c-4.420 0-7.990 3.580-7.990 8s3.570 8 7.990 8c3.730 0 6.840-2.550 7.730-6h-2.080c-.82 2.330-3.040 4-5.650 4-3.310 0-6-2.690-6-6s2.690-6 6-6c1.660 0 3.140.69 4.220 1.780L13 11h7V4l-2.350 2.350z"/></svg>
<div class="a" style="left:1448px;top:274.500px;width:129.500px;height:39px;border:2px solid #cbcbcb;border-radius:6px;background:#fff"></div>
<span class="x" style="left:1461.50px;top:282.50px;letter-spacing:0.527px;font-size:24px;color:#404040;-webkit-text-stroke:.2px currentColor">https://54</span>
<!-- three view icons -->
<svg style="left:1597.500px;top:281px" width="27.500" height="27" viewBox="0 0 27.500 27"><path fill="#858585" fill-rule="evenodd" d="M3 0H24.500a3 3 0 0 1 3 3V24a3 3 0 0 1-3 3H3a3 3 0 0 1-3-3V3A3 3 0 0 1 3 0zM3.500 3.500V15.500H24V3.500z"/></svg>
<svg style="left:1645.500px;top:281px" width="27.500" height="27" viewBox="0 0 27.500 27"><path fill="#41b883" fill-rule="evenodd" d="M3 0H24.500a3 3 0 0 1 3 3V24a3 3 0 0 1-3 3H3a3 3 0 0 1-3-3V3A3 3 0 0 1 3 0zM3.500 3.500V23.500H14V3.500z"/></svg>
<svg style="left:1692px;top:280.500px" width="28" height="28" viewBox="0 0 28 28"><path fill="#858585" d="M9 0H25.500A2.500 2.500 0 0 1 28 2.500V19a2.500 2.500 0 0 1-2.500 2.500H9A2.500 2.500 0 0 1 6.500 19V2.500A2.500 2.500 0 0 1 9 0zM0 6.500H3.500V24.500H21.500V28H2.500A2.500 2.500 0 0 1 0 25.500z"/></svg>
<!-- toggle -->
<div class="a" style="left:1750px;top:275px;width:84px;height:39px;border-radius:6.500px;background:#ffd399;border:1.500px solid #e9bd84"></div>
<div class="a" style="left:1804.500px;top:278px;width:24.500px;height:30px;border-radius:6px;background:#fff"></div>
<!-- app bar content -->
<div class="a" style="left:1328.500px;top:357px;width:28.500px;height:3px;background:#fff"></div>
<div class="a" style="left:1328.500px;top:364.500px;width:28.500px;height:3px;background:#fff"></div>
<div class="a" style="left:1328.500px;top:372px;width:28.500px;height:3px;background:#fff"></div>
<span class="x" style="left:1408.50px;top:351.00px;letter-spacing:0.612px;font-size:30px;color:#fff;-webkit-text-stroke:1.300px #fff">VuexFireAuth</span>
<!-- page content -->
<span class="x b" style="left:1325.00px;top:442.30px;letter-spacing:-0.688px;font-size:41.500px;color:#212121">HomePage</span>
<span class="x" style="left:1349.00px;top:710.00px;letter-spacing:0.023px;font-size:35.500px;color:#212121">Kangaroo Valley Safari</span>
<span class="x" style="left:1349.00px;top:756.00px;letter-spacing:-0.019px;font-size:21px;color:#3a3a3a;-webkit-text-stroke:.15px currentColor">Located two hours south of Sydney in the</span>
<span class="x" style="left:1349.00px;top:787.00px;letter-spacing:-0.153px;font-size:21px;color:#3a3a3a;-webkit-text-stroke:.15px currentColor">Southern Highlands of New South Wales, ...</span>
<span class="x" style="left:1369.50px;top:864.70px;letter-spacing:-1.072px;font-size:21px;color:#ff9800;-webkit-text-stroke:1.200px #ff9800">SHARE</span>
<span class="x" style="left:1505.00px;top:864.70px;letter-spacing:-1.460px;font-size:21px;color:#ff9800;-webkit-text-stroke:1.200px #ff9800">EXPLORE</span>
<!-- ===== desert card image (472 x 171.500) ===== -->
<svg style="left:1325px;top:495px;border-radius:3px 3px 0 0;overflow:hidden" width="472" height="171.500" viewBox="0 0 472 171.500">
<defs>
 <linearGradient id="sky" x1="0" y1="0" x2="0" y2="1">
  <stop offset="0" stop-color="#8d96ca"/><stop offset=".25" stop-color="#9f9ecc"/><stop offset=".44" stop-color="#aa9dc4"/>
  <stop offset=".54" stop-color="#c39ab8"/><stop offset=".6" stop-color="#e0949c"/><stop offset=".635" stop-color="#f08a6a"/><stop offset=".665" stop-color="#f88a30"/><stop offset=".69" stop-color="#f5821e"/><stop offset="1" stop-color="#f5821e"/>
 </linearGradient>
 <linearGradient id="skyx" x1="0" y1="0" x2="1" y2="0">
  <stop offset="0" stop-color="#6f7fc0" stop-opacity=".35"/><stop offset=".3" stop-color="#8d8fc4" stop-opacity=".1"/><stop offset=".6" stop-color="#d6d2ee" stop-opacity=".3"/><stop offset=".8" stop-color="#dcd8f2" stop-opacity=".4"/><stop offset="1" stop-color="#c4c0e2" stop-opacity=".3"/>
 </linearGradient>
 <radialGradient id="sun" cx="253" cy="113" r="120" gradientUnits="userSpaceOnUse" gradientTransform="translate(253 113) scale(1 .45) translate(-253 -113)">
  <stop offset="0" stop-color="#fff" stop-opacity="1"/><stop offset=".12" stop-color="#fff3a8" stop-opacity=".95"/><stop offset=".3" stop-color="#ffb62e" stop-opacity=".7"/><stop offset=".6" stop-color="#f5763a" stop-opacity=".35"/><stop offset="1" stop-color="#e8849c" stop-opacity="0"/>
 </radialGradient>
 <linearGradient id="band" x1="0" y1="0" x2="1" y2="0">
  <stop offset="0" stop-color="#f59a28" stop-opacity=".5"/><stop offset=".2" stop-color="#ffbe22"/><stop offset=".45" stop-color="#ffe35a"/><stop offset=".54" stop-color="#fffbe0"/><stop offset=".63" stop-color="#ffdf4a"/><stop offset=".85" stop-color="#ffc22a"/><stop offset="1" stop-color="#f5a040" stop-opacity=".6"/>
 </linearGradient>
 <linearGradient id="gnd" x1="0" y1="0" x2="0" y2="1">
  <stop offset="0" stop-color="#c8601a"/><stop offset=".2" stop-color="#9a4814"/><stop offset=".45" stop-color="#5a2e10"/><stop offset=".75" stop-color="#38220e"/><stop offset="1" stop-color="#22150a"/>
 </linearGradient>
 <radialGradient id="gglow" cx="254" cy="120" r="125" gradientUnits="userSpaceOnUse" gradientTransform="translate(254 120) scale(1 .6) translate(-254 -120)">
  <stop offset="0" stop-color="#ff5a10" stop-opacity=".97"/><stop offset=".35" stop-color="#ea4a0c" stop-opacity=".8"/><stop offset=".7" stop-color="#b83a0a" stop-opacity=".32"/><stop offset="1" stop-color="#a03008" stop-opacity="0"/>
 </radialGradient>
 <linearGradient id="gdark" x1="0" y1="0" x2="1" y2="0">
  <stop offset="0" stop-color="#1a1208" stop-opacity=".25"/><stop offset=".45" stop-color="#1a1208" stop-opacity="0"/><stop offset=".62" stop-color="#1c190c" stop-opacity=".55"/><stop offset="1" stop-color="#14140a" stop-opacity=".85"/>
 </linearGradient>
 <filter id="dcl" x="0" y="0" width="100%" height="100%">
  <feTurbulence type="fractalNoise" baseFrequency=".018 .07" numOctaves="4" seed="7" result="n"/>
  <feColorMatrix in="n" type="matrix" values="0 0 0 0 1  0 0 0 0 1  0 0 0 0 1  0 0 0 2.600 -1.050"/>
 </filter>
 <filter id="dcd" x="0" y="0" width="100%" height="100%">
  <feTurbulence type="fractalNoise" baseFrequency=".015 .06" numOctaves="3" seed="23" result="n"/>
  <feColorMatrix in="n" type="matrix" values="0 0 0 0 .32  0 0 0 0 .30  0 0 0 0 .48  0 0 0 2.400 -.95"/>
 </filter>
 <filter id="dgt" x="0" y="0" width="100%" height="100%">
  <feTurbulence type="fractalNoise" baseFrequency=".09 .16" numOctaves="3" seed="4" result="n"/>
  <feColorMatrix in="n" type="matrix" values="0 0 0 0 .05  0 0 0 0 .03  0 0 0 0 .01  0 0 0 3.600 -1.300"/>
 </filter>
 <filter id="dgt2" x="0" y="0" width="100%" height="100%">
  <feTurbulence type="fractalNoise" baseFrequency=".11 .2" numOctaves="2" seed="11" result="n"/>
  <feColorMatrix in="n" type="matrix" values="0 0 0 0 .9  0 0 0 0 .3  0 0 0 0 .05  0 0 0 3 -1.600"/>
 </filter>
 <filter id="bl4" x="-50%" y="-400%" width="200%" height="900%"><feGaussianBlur stdDeviation="5"/></filter>
 <filter id="bl2" x="-50%" y="-300%" width="200%" height="700%"><feGaussianBlur stdDeviation="2.200"/></filter>
 <filter id="bl1" x="-20%" y="-100%" width="140%" height="300%"><feGaussianBlur stdDeviation="1.200"/></filter>
 <filter id="bl05"><feGaussianBlur stdDeviation=".45"/></filter>
</defs>
<rect width="472" height="171.500" fill="url(#sky)"/>
<rect width="472" height="125" fill="url(#skyx)"/>
<rect width="472" height="125" filter="url(#dcd)" opacity=".5"/>
<rect width="472" height="125" filter="url(#dcl)" opacity=".4"/>
<g filter="url(#bl4)">
 <ellipse cx="135" cy="14" rx="62" ry="11" fill="#7f7ca6" opacity=".75"/>
 <ellipse cx="215" cy="36" rx="70" ry="9" fill="#8583ad" opacity=".6"/>
 <ellipse cx="70" cy="72" rx="85" ry="10" fill="#8a86ae" opacity=".6"/>
 <ellipse cx="330" cy="58" rx="60" ry="8" fill="#8f8ab0" opacity=".5"/>
 <ellipse cx="420" cy="8" rx="50" ry="7" fill="#8884ac" opacity=".55"/>
 <ellipse cx="180" cy="88" rx="120" ry="7" fill="#9088ae" opacity=".5"/>
 <ellipse cx="420" cy="88" rx="60" ry="7" fill="#9a8eb0" opacity=".5"/>
</g>
<g filter="url(#bl2)" fill="#eef0ff">
 <ellipse cx="272" cy="30" rx="20" ry="3.500" transform="rotate(24 272 30)" opacity=".85"/>
 <ellipse cx="340" cy="46" rx="16" ry="3" transform="rotate(18 340 46)" opacity=".8"/>
 <ellipse cx="385" cy="20" rx="30" ry="5" opacity=".55"/>
 <ellipse cx="445" cy="24" rx="22" ry="4" opacity=".7"/>
 <ellipse cx="400" cy="58" rx="18" ry="3" opacity=".6"/>
 <ellipse cx="300" cy="70" rx="28" ry="3" opacity=".5"/>
 <ellipse cx="90" cy="40" rx="40" ry="5" opacity=".3"/>
</g>
<ellipse cx="290" cy="96" rx="150" ry="16" fill="#f09aa0" opacity=".55" filter="url(#bl4)"/>
<ellipse cx="110" cy="97" rx="130" ry="7" fill="#6d648e" opacity=".55" filter="url(#bl4)"/>
<ellipse cx="430" cy="99" rx="60" ry="5" fill="#84749c" opacity=".45" filter="url(#bl4)"/>
<ellipse cx="262" cy="104" rx="95" ry="8" fill="#f27446" opacity=".55" filter="url(#bl4)"/>

<!-- pink haze + sun -->
<rect y="60" width="472" height="80" fill="url(#sun)"/>
<path d="M0 109.500C40 107.500 70 109 100 108 150 107 200 107.500 250 107 300 107 340 108 372 108.500 400 109 440 110 472 111V118.500C430 119 380 120 330 119.500 290 119.500 260 121 230 119 180 118.500 120 119 60 118.500 30 118.500 10 119 0 118.500z" fill="url(#band)" filter="url(#bl1)"/>
<ellipse cx="254" cy="113.500" rx="12" ry="4.500" fill="#fffef0" filter="url(#bl1)"/>
<!-- ground -->
<clipPath id="gc"><path d="M0 120C30 117 60 118 90 117 130 116 170 119 210 120 250 122 290 118 330 118 360 117 380 114 400 112 412 109 425 108 437 106 445 107 452 110 460 109 465 112 470 112 472 113V171.500H0z"/></clipPath>
<g clip-path="url(#gc)">
 <rect y="100" width="472" height="71.500" fill="url(#gnd)"/>
 <rect y="100" width="472" height="71.500" fill="url(#gglow)"/>
 <rect y="100" width="472" height="71.500" fill="url(#gdark)"/>
 <rect y="104" width="472" height="67.500" filter="url(#dgt)"/>
 <rect y="104" width="472" height="67.500" filter="url(#dgt2)" opacity=".2"/>
 <path d="M0 152C60 144 120 150 180 154 240 160 300 150 360 146 400 142 440 144 472 140V171.500H0z" fill="#1b1409" opacity=".45" filter="url(#bl1)"/>
</g>
<!-- distant cacti -->
<g stroke="#2b1a0e" stroke-linecap="round" fill="none" filter="url(#bl05)">
 <path d="M116.500 79V136" stroke-width="2.800"/><path d="M104 103L107.500 124H116" stroke-width="2.600"/><path d="M116.500 122H121.500L123 116.500" stroke-width="2.200"/>
 <path d="M159 89.500V128" stroke-width="2.200"/>
 <path d="M88 110.500V132" stroke-width="1.600"/>
 <path d="M23 95V150" stroke-width="3"/><path d="M14 120.500C15 124 18 125 22.500 125" stroke-width="2.400"/>
 <path d="M249 75V121" stroke-width="2.600" stroke="#3a1c10"/><path d="M244 100.500L246.500 108H249" stroke-width="2" stroke="#3a1c10"/>
 <path d="M280 117V133M313 112V135M342.500 121V138M346.500 113V140M358 123V142M366.500 114V146M377 122V140M397.500 113V138M401.500 109V128M418.500 104V128M424 111.500V130M432 120V136M467.500 100V128" stroke-width="2"/>
 <path d="M463 121C463.500 127 465 130 467.500 131" stroke-width="1.800"/>
</g>
<!-- grasses / ocotillo -->
<g stroke="#9a7a3c" stroke-width="1.100" fill="none" opacity=".85" stroke-linecap="round">
 <path d="M112 171C108 150 100 135 86 126M118 171C116 150 112 138 108 124M124 171C128 150 134 130 142 99M130 171C140 150 160 125 181 103M134 171C148 152 170 128 197 106M126 171C132 148 146 126 168 108M138 171C150 158 172 140 190 132M106 171C100 158 92 148 80 140M120 171C121 150 119 135 116 128"/>
 <path d="M70 125L76 105M60 128L68 108M50 130L44 112" opacity=".6"/>
</g>
<!-- big saguaro -->
<g fill="#2a1c12">
 <path d="M33.500 0H48.500C48.500 30 48.500 60 48.500 90 48.500 120 48.500 150 48.500 171.500H27.500C29 150 30.500 120 31.500 95 32.500 60 33.500 30 33.500 0z"/>
 <path d="M10.500 9C10 5 13 3.500 16 4.500 18.500 5.500 19.500 8 19.500 12 20.500 30 22 44 24.500 54 28 55 30.500 59 31.500 65L32 86C25 84 20.500 78 18.500 70 14 55 11 30 10.500 9z"/>
 <path d="M48 14C53 13 56.500 8 57.500 0H66C65.500 10 60 20 48 24z"/>
</g>
<path d="M41 0C42 50 40 110 39 171" stroke="#4a3322" stroke-width="1.500" fill="none" opacity=".6"/>
<path d="M49 23.500C59 19.500 65 10 66 0" stroke="#c2502a" stroke-width="1" fill="none" opacity=".7"/>
</svg>
